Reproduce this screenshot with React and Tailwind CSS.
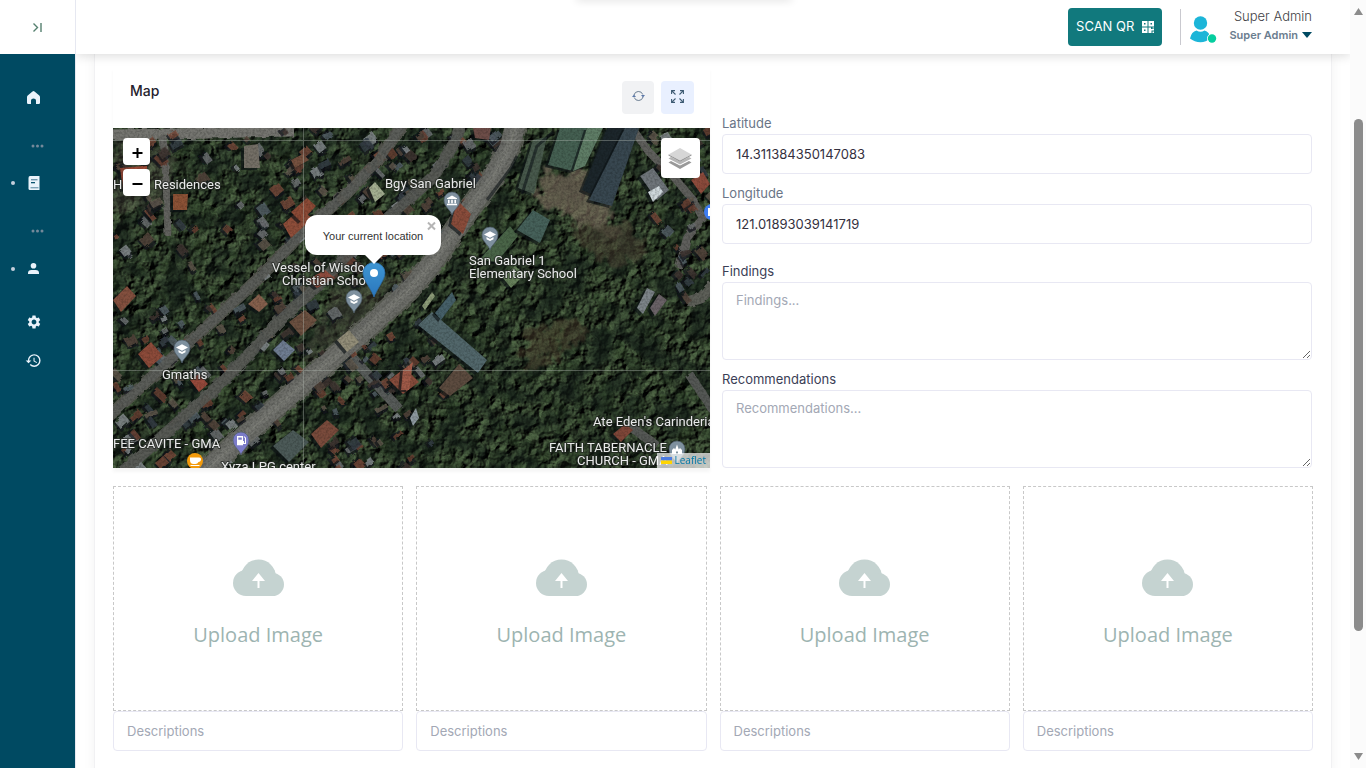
import React from "react";
import { MdSettings, MdHistory } from "react-icons/md";

const FOREST = ["#1d2b1b", "#263823", "#2c4127", "#182317", "#31462c", "#223221", "#141d15"];
const ROOFS = ["#6f4436", "#5a4a3f", "#74787a", "#57646c", "#453a34", "#7d4d3c", "#655d50", "#8d9396", "#3a424b"];

function seeded(seed) {
  let s = seed;
  return () => {
    s = (s * 16807) % 2147483647;
    return s / 2147483647;
  };
}

const rand = seeded(4127);
const trees = Array.from({ length: 1300 }, () => ({
  x: Math.round(rand() * 597),
  y: Math.round(rand() * 340),
  r: 2 + Math.round(rand() * 6),
  c: FOREST[Math.floor(rand() * FOREST.length)],
}));

const inside = (x, y) => {
  const edge = y < 90 ? 400 - y * 0.5 : 355 - (y - 90) * 0.9;
  const left = x < edge - 10;
  const south = y > 190 && x > 200 && x < 330 && x + y > 430;
  const east = x > 535 && y < 170 && x - y * 0.25 > 520;
  const gap = (x > 40 && x < 150 && y > 30 && y < 180) || (x < 90 && y > 125 && y < 170);
  return (left && (!gap || rand() > 0.8)) || south || east;
};
const houses = Array.from({ length: 640 }, () => ({
  x: Math.round(rand() * 597),
  y: Math.round(rand() * 340),
  w: 4 + Math.round(rand() * 9),
  h: 4 + Math.round(rand() * 6),
  a: (rand() > 0.5 ? -42 : 40) + Math.round(rand() * 16),
  c: ROOFS[Math.floor(rand() * ROOFS.length)],
})).filter((h) => inside(h.x, h.y));

const bigRoofs = [
  ["7,40 30,38 34,58 10,62", "#8a4535"],
  ["16,40 34,38 34,60 24,62", "#a04e3a"],
  ["0,172 14,158 23,168 8,184", "#84503f"],
  ["131,18 145,16 147,40 131,40", "#746f66"],
  ["60,66 75,66 74,82 60,82", "#8c5236"],
  ["170,96 186,82 200,90 178,110", "#8f4e3a"],
  ["178,84 194,70 203,78 188,94", "#8c4a36"],
  ["256,60 262,54 272,66 262,74", "#a3ae90"],
  ["160,222 170,212 182,222 171,233", "#6f7d92"],
  ["224,212 236,202 246,214 234,224", "#928d78"],
  ["25,226 38,214 50,228 36,240", "#8d4b3a"],
  ["178,32 190,26 196,32 182,40", "#76513f"],
  ["77,252 86,246 95,256 86,264", "#96493b"],
  ["135,176 146,166 155,176 146,184", "#86604d"],
  ["194,152 212,142 222,150 204,160", "#8f4c3e"],
  ["176,194 192,182 204,192 188,208", "#6b5040"],
  ["276,252 292,240 306,254 290,266", "#874c3c"],
  ["290,242 300,234 296,262 288,262", "#a05a48"],
  ["198,306 214,292 226,302 208,320", "#7a4b3c"],
  ["160,318 180,302 196,314 176,334", "#4c5a58"],
  ["360,0 378,0 376,12 362,10", "#6d4d48"],
  ["344,72 358,86 350,106 338,96", "#8a4c3b"],
  ["420,12 434,9 421,66 405,60", "#48594c"],
  ["447,0 474,0 460,43 435,37", "#456052"],
  ["474,0 490,0 472,38 460,43", "#5f7d66"],
  ["494,0 512,0 487,70 469,62", "#1c262b"],
  ["512,0 526,0 499,78 476,72", "#384750"],
  ["366,132 397,98 405,108 384,134", "#4a6548"],
  ["404,102 420,82 437,92 427,115", "#46615a"],
  ["390,150 402,138 412,146 398,160", "#66805a"],
  ["319,184 374,232 365,245 305,197", "#52676b"],
  ["339,164 343,172 328,192 322,185", "#466069"],
  ["309,178 319,164 322,168 312,182", "#8c9b78"],
  ["346,236 360,250 337,268 326,260", "#5c4b3f"],
  ["303,280 306,290 300,298 297,290", "#8d999f"],
  ["527,48 540,40 556,62 544,72", "#6f757a"],
  ["535,64 546,58 550,64 540,74", "#cfd8dc"],
  ["578,52 590,44 597,56 588,66", "#8d4b3c"],
  ["524,180 534,160 542,164 530,186", "#7d8489"],
  ["537,180 546,166 554,172 542,188", "#6a6267"],
  ["500,306 512,296 520,302 508,314", "#7f4638"],
];

const main = "M90 345 L124 314 L192 254 L248 206 L296 162 L320 134 L354 84 L378 52 L396 20 L403 -4";
const west = "M-4 288 L54 235 L104 189 L147 149 L190 104 L232 67 L264 34 L290 -4";
const middle = "M8 345 L60 299 L104 259 L137 225 L164 195 L200 162 L236 126 L287 79 L320 49 L342 14 L348 -4";

function Label({ x, y, children }) {
  return (
    <text x={x} y={y} fill="#e9eaea" stroke="#222622" strokeWidth="2" strokeOpacity="0.7" strokeLinejoin="round" paintOrder="stroke">
      {children}
    </text>
  );
}

function Pin({ x, y, color = "#7e909e", kind }) {
  return (
    <g transform={`translate(${x} ${y})`}>
      <path d="M0 14 C-1.500 8.500 -8 6 -8 -1 A8 8 0 0 1 8 -1 C8 6 1.500 8.500 0 14Z" fill={color} stroke="#4d5c68" strokeWidth="0.7" />
      {kind === "school" && (
        <g fill="#fff">
          <path d="M-6 -1.500 L0 -4.800 L6 -1.500 L0 1.800Z" />
          <path d="M-3.500 1 L0 3 L3.500 1 V3.200 L0 5 L-3.500 3.200Z" />
        </g>
      )}
      {kind === "hall" && (
        <path d="M-5 -2.800 L0 -5.500 L5 -2.800 V-2 H-5Z M-4 -1.200 H-2.400 V2.200 H-4Z M-0.800 -1.200 H0.800 V2.200 H-0.800Z M2.400 -1.200 H4 V2.200 H2.400Z M-5 2.800 H5 V4.200 H-5Z" fill="#fff" />
      )}
      {kind === "fuel" && (
        <path d="M-4 -5 H2 V0 H3 V2 H4 V-3 L2.600 -4 L3.300 -4.800 L5 -3.200 V3 H2 V4.200 H-4Z M-2.700 -3.600 V-1.300 H0.800 V-3.600Z" fill="#fff" fillRule="evenodd" />
      )}
      {kind === "church" && <path d="M-5 4 V0 L-3 -2 L-1.800 -0.500 L0 -5.500 L1.800 -0.500 L3 -2 L5 0 V4 H1 V1.500 H-1 V4Z" fill="#fff" />}
    </g>
  );
}

function Satellite() {
  return (
    <svg className="absolute inset-0 h-full w-full" viewBox="0 0 597 340" preserveAspectRatio="xMinYMid slice" role="img" aria-label="Satellite map">
      <defs>
        <filter id="canopy" x="0" y="0" width="100%" height="100%" colorInterpolationFilters="sRGB">
          <feTurbulence type="fractalNoise" baseFrequency="0.1" numOctaves="4" seed="8" result="n" />
          <feDiffuseLighting in="n" surfaceScale="6" lightingColor="#526a48" result="l">
            <feDistantLight azimuth="220" elevation="40" />
          </feDiffuseLighting>
        </filter>
        <filter id="shade" x="0" y="0" width="100%" height="100%" colorInterpolationFilters="sRGB">
          <feTurbulence type="fractalNoise" baseFrequency="0.04" numOctaves="4" seed="21" />
          <feColorMatrix values="0 0 0 0 0.07  0 0 0 0 0.11  0 0 0 0 0.09  4 0 0 0 -1.700" />
        </filter>
        <filter id="grain" x="0" y="0" width="100%" height="100%" colorInterpolationFilters="sRGB">
          <feTurbulence type="fractalNoise" baseFrequency="0.45" numOctaves="2" seed="5" />
          <feColorMatrix values="0 0 0 0 0.03  0 0 0 0 0.04  0 0 0 0 0.03  2.500 0 0 0 -0.950" />
        </filter>
        <filter id="rough" x="-2%" y="-2%" width="104%" height="104%">
          <feTurbulence type="fractalNoise" baseFrequency="0.14" numOctaves="2" seed="3" result="t" />
          <feDisplacementMap in="SourceGraphic" in2="t" scale="4" />
        </filter>
        <filter id="haze" x="-20%" y="-20%" width="140%" height="140%" colorInterpolationFilters="sRGB">
          <feTurbulence type="fractalNoise" baseFrequency="0.1" numOctaves="4" seed="12" result="t" />
          <feDisplacementMap in="SourceGraphic" in2="t" scale="34" xChannelSelector="R" yChannelSelector="G" result="d" />
          <feGaussianBlur in="d" stdDeviation="1" />
        </filter>
      </defs>
      <rect width="597" height="340" fill="#222e20" />
      <rect width="597" height="340" filter="url(#canopy)" />
      <g opacity="0.4" filter="url(#rough)">
        {trees.map((t, i) => (
          <circle key={i} cx={t.x} cy={t.y} r={t.r} fill={t.c} />
        ))}
      </g>
      <rect width="597" height="340" filter="url(#shade)" opacity="0.6" />
      <g filter="url(#haze)" opacity="0.7">
        <path d="M430 40 L480 46 L482 70 L500 84 L505 115 L478 100 L450 86 L424 74Z" fill="#7b6f5f" />
        <path d="M455 95 L520 96 L535 125 L500 140 L470 120Z" fill="#544a3a" opacity="0.7" />
        <path d="M410 204 L440 196 L470 192 L474 212 L440 228 L414 246Z" fill="#594b38" opacity="0.65" />
        <path d="M0 10 L60 14 L60 70 L0 90Z" fill="#5c5a4e" opacity="0.5" />
        <path d="M220 160 L290 150 L250 200 L190 240Z" fill="#5c584b" opacity="0.5" />
      </g>
      <g fill="none" stroke="#5d5f59" strokeLinejoin="round" filter="url(#rough)">
        <path d="M-4 7 L60 6 L130 4 L180 3" stroke="#74756f" strokeWidth="11" />
        <path d="M50 8 L53 50 L55 108" stroke="#63645f" strokeWidth="7" />
        <path d={west} stroke="#54574f" strokeWidth="12" />
        <path d={middle} stroke="#50534e" strokeWidth="12" />
        <path d="M237 227 L286 281" stroke="#595b5a" strokeWidth="10" />
        <path d="M516 -4 L536 24 L560 48 L580 72 L590 90 L574 110 L566 140" stroke="#5e5f5b" strokeWidth="8" />
        <path d="M600 157 L588 170 L574 174" strokeWidth="11" />
        <path d="M576 246 L600 282 M514 296 L544 318" stroke="#555954" strokeWidth="9" />
        <path d={main} stroke="#5c5e57" strokeWidth="23" />
      </g>
      <g filter="url(#rough)">
        {houses.map((h, i) => (
          <g key={i} transform={`translate(${h.x} ${h.y}) rotate(${h.a})`}>
            <rect x="-2" y="1" width={h.w + 1} height={h.h + 2} fill="#10161a" opacity="0.7" />
            <rect width={h.w} height={h.h} fill={h.c} opacity="0.8" />
          </g>
        ))}
      </g>
      <g fill="none" strokeLinejoin="round">
        <path d={west} stroke="#5c5e5a" strokeWidth="9" opacity="0.9" />
        <path d={middle} stroke="#595b57" strokeWidth="10" opacity="0.9" />
        <path d={main} stroke="#6d6e69" strokeWidth="19" opacity="0.95" />
        <path d={main} stroke="#7c7d77" strokeWidth="8" opacity="0.6" />
        <path d={main} stroke="#8a8c82" strokeWidth="1" opacity="0.5" />
      </g>
      {bigRoofs.map(([points, fill]) => (
        <g key={points}>
          <polygon points={points} fill="#0d1316" opacity="0.65" transform="translate(-3 2)" />
          <polygon points={points} fill={fill} />
        </g>
      ))}
      <path d="M409 66 L424 18 L440 4 M374 72 L398 40 L404 28" stroke="#10171a" strokeWidth="3" fill="none" opacity="0.6" />
      <rect width="597" height="340" filter="url(#grain)" opacity="0.2" />
      <path d="M0 12.500 H597 M0 242.500 H597 M190.500 0 V340" stroke="#aeb6ae" strokeWidth="1" opacity="0.4" />
      <Pin x={339} y={73} kind="hall" />
      <Pin x={377} y={108} kind="school" />
      <Pin x={241} y={171} kind="school" />
      <Pin x={69} y={221} kind="school" />
      <Pin x={128} y={313} kind="fuel" color="#7b7bc8" />
      <Pin x={564} y={322} kind="church" />
      <circle cx="82" cy="333" r="8" fill="#f29a0c" />
      <path d="M77 329.500 H86 Q88.500 329.500 88 332 Q87.500 334 85.500 334 Q84.500 336 82.500 336 H80.500 Q77 336 77 332Z M77.500 337 H86.500 V338 H77.500Z" fill="#fff" />
      <circle cx="599" cy="84" r="8" fill="#3f7df0" />
      <path d="M595 80 H597 V88 H595Z" fill="#fff" />
      <g fontFamily="Roboto, sans-serif" fontSize="13">
        <Label x={0} y={61}>Hu</Label>
        <Label x={41} y={61}>Residences</Label>
        <Label x={272} y={60}>Bgy San Gabriel</Label>
        <Label x={356} y={137}>
          San Gabriel 1
          <tspan x={356} dy="13">Elementary School</tspan>
        </Label>
        <Label x={159} y={144}>
          Vessel of Wisdo
          <tspan x={169} dy="13">Christian Scho</tspan>
        </Label>
        <Label x={49} y={251}>Gmaths</Label>
        <Label x={0} y={320}>FEE CAVITE - GMA</Label>
        <Label x={108} y={343}>Xyza LPG center</Label>
        <Label x={480} y={298}>Ate Eden's Carinderia</Label>
        <Label x={436} y={324}>
          FAITH TABERNACLE
          <tspan x={464} dy="13">CHURCH - GMA</tspan>
        </Label>
      </g>
    </svg>
  );
}

function MapView() {
  return (
    <div className="relative h-[340px] overflow-hidden bg-[#222e20]">
      <Satellite />
      <div className="absolute left-[10px] top-[10px] flex flex-col gap-1 text-black">
        <button type="button" aria-label="Zoom in" className="flex h-[27px] w-[27px] items-center justify-center rounded bg-white pl-px pt-0.5">
          <svg width="11" height="11" viewBox="0 0 11 11"><path d="M0.500 6 H10.500 M5.500 1 V11" stroke="currentColor" strokeWidth="2" /></svg>
        </button>
        <button type="button" aria-label="Zoom out" className="flex h-[27px] w-[27px] items-center justify-center rounded bg-white pl-px pt-0.5">
          <svg width="11" height="11" viewBox="0 0 11 11"><path d="M0.500 6 H10.500" stroke="currentColor" strokeWidth="2" /></svg>
        </button>
      </div>
      <button type="button" aria-label="Layers" className="absolute right-[10px] top-[10px] flex h-10 w-[39px] items-center justify-center rounded bg-white pr-0.5">
        <svg width="26" height="26" viewBox="0 0 26 26">
          <path d="M1.500 17.500 L4 16 L13 20.500 L22 16 L24.500 17.500 L13 24Z" fill="#999" />
          <path d="M1.500 13.500 L4 12 L13 16.500 L22 12 L24.500 13.500 L13 19.500Z" fill="#b5b5b5" />
          <path d="M1.500 9.500 L13 3 L24.500 9.500 L13 15.500Z" fill="#d6d6d6" />
          <path d="M1.500 9.500 L13 15.500 L24.500 9.500 V10.500 L13 16.800 L1.500 10.500Z" fill="#8f8f8f" />
        </svg>
      </button>
      <svg className="absolute left-[249px] top-[134px]" width="24" height="36" viewBox="0 0 24 36" aria-label="Marker">
        <defs>
          <linearGradient id="pin" x1="0" y1="0" x2="0" y2="1">
            <stop offset="0" stopColor="#3f97d3" />
            <stop offset="1" stopColor="#2a76bd" />
          </linearGradient>
        </defs>
        <path d="M12 35 C10 28 1 18 1 11 A11 10.500 0 0 1 23 11 C23 18 14 28 12 35Z" fill="url(#pin)" stroke="#2e6fa8" strokeWidth="0.8" />
        <circle cx="12" cy="11" r="4" fill="#fff" />
      </svg>
      <div className="absolute left-[192px] top-[87px] flex h-10 w-[136px] items-center justify-center rounded-xl bg-white pt-0.5 font-['Liberation_Sans',sans-serif] text-[11px] text-[#333]">
        Your current location
        <button type="button" aria-label="Close popup" className="absolute right-[5px] top-[6px] text-[#b5b5b5]">
          <svg width="9" height="10" viewBox="0 0 9 10"><path d="M1 1.500 L8 8.500 M8 1.500 L1 8.500" stroke="currentColor" strokeWidth="2" /></svg>
        </button>
        <svg className="absolute left-[60px] top-10" width="18" height="9" viewBox="0 0 18 9"><path d="M0 0 H18 L9 9Z" fill="#fff" /></svg>
      </div>
      <div className="absolute bottom-0 right-0 flex h-[15px] items-center gap-[3px] bg-white/70 px-1 font-['Open_Sans',sans-serif] text-[10px] leading-[15px]">
        <svg width="11" height="7" viewBox="0 0 11 7"><path d="M0 0H11V3.500H0Z" fill="#4c7be1" /><path d="M0 3.500H11V7H0Z" fill="#ffd500" /></svg>
        <a href="#leaflet" className="text-[#0078a8]">Leaflet</a>
      </div>
    </div>
  );
}

const fieldBox = "block w-full rounded border border-[#e8e8f3] bg-white px-[13px] text-[13px] text-[#34303e] outline-none placeholder:text-[#a3a8b5]";
const labelBox = "block pb-0.5 text-[13px] leading-[18px]";

function Dots() {
  return (
    <svg className="ml-[31px] mt-5 h-[18px]" width="13" viewBox="0 0 13 18" fill="#74899a" aria-hidden="true">
      <circle cx="2" cy="9" r="1.500" /><circle cx="6.500" cy="9" r="1.500" /><circle cx="11" cy="9" r="1.500" />
    </svg>
  );
}

function NavItem({ label, bullet, className = "", children }) {
  return (
    <a href={"#" + label.toLowerCase()} aria-label={label} className={"flex h-[39px] items-center text-[#eaf3fb] " + className}>
      <span className="flex w-[25px] justify-center">
        {bullet && <span className="h-1 w-1 rounded-full bg-[#c5cfdc]" />}
      </span>
      <span className="flex w-[17px] justify-center">{children}</span>
    </a>
  );
}

function Sidebar() {
  return (
    <aside className="flex w-[75px] shrink-0 flex-col bg-[#004a62]">
      <div className="flex h-[54px] shrink-0 items-center bg-white pl-[32px]">
        <button type="button" aria-label="Expand menu" className="text-[#55806f]">
          <svg width="11" height="11" viewBox="0 0 11 11" fill="none" stroke="currentColor" strokeWidth="1.400"><path d="M1.500 1.500 L5.500 5.500 L1.500 9.500 M9 1 V10" /></svg>
        </button>
      </div>
      <nav className="flex flex-col pt-6">
        <NavItem label="Home">
          <svg width="13" height="13" viewBox="0 0 13 13" fill="currentColor"><path d="M5.500 0.500 Q6.500 -0.300 7.500 0.500 L12.300 4.600 Q13 5.200 13 6 V11.800 Q13 13 11.800 13 H9 V9.500 Q9 7.500 6.500 7.500 Q4 7.500 4 9.500 V13 H1.200 Q0 13 0 11.800 V6 Q0 5.200 0.700 4.600Z" /></svg>
        </NavItem>
        <Dots />
        <NavItem label="Records" bullet className="mt-2">
          <svg width="12" height="14" viewBox="0 0 12 14"><path d="M2 0 H11.500 V14 H2 Q0.500 14 0.500 12.500 V2 Q0.500 0 2 0Z" fill="currentColor" /><path d="M2.500 11 H10.500 V12.400 H2.500Z" fill="#7fa3b8" /><path d="M3 3 H9.500 V4.400 H3Z" fill="#6f96ac" /><path d="M3 6 H7 V7.300 H3Z" fill="#0b5470" /></svg>
        </NavItem>
        <Dots />
        <NavItem label="Users" bullet className="mt-[9px]">
          <svg width="11" height="11" viewBox="0 0 11 11" fill="currentColor"><circle cx="5.500" cy="2.800" r="2.800" /><path d="M0 11 V10 Q0 7 3.500 7 H7.500 Q11 7 11 10 V11Z" /></svg>
        </NavItem>
        <NavItem label="Settings" className="mt-[14px]"><MdSettings size={16} className="shrink-0" /></NavItem>
        <NavItem label="History"><MdHistory size={17} className="shrink-0" /></NavItem>
      </nav>
    </aside>
  );
}

function Header() {
  return (
    <header className="relative z-10 flex h-[54px] shrink-0 items-center justify-end bg-white pr-[38px] shadow-[0_2px_10px_rgba(0,0,0,0.14)]">
      <div className="absolute inset-x-0 top-0 flex justify-center overflow-hidden pb-3 pr-[58px]" aria-hidden="true">
        <div className="-mt-1 h-1 w-[216px] rounded-full shadow-[0_0_8px_rgba(0,0,0,0.18)]" />
      </div>
      <button type="button" className="relative flex h-[38px] items-center gap-2 rounded bg-[#11797d] px-[8px] text-[13px] text-white">
        SCAN QR
        <svg width="12" height="12" viewBox="0 0 12 12" fill="#fff"><path fillRule="evenodd" d="M0 0H5.500V5.500H0Z M2 2V3.500H3.500V2Z M6.500 0H12V5.500H6.500Z M8.500 2V3.500H10V2Z M0 6.500H5.500V12H0Z M2 8.500V10H3.500V8.500Z" /><path d="M6.500 6.500H9V8H12V9.500H9.500V12H6.500Z M10.500 6.500H12V7.500H10.500Z M10.500 10.500H12V12H10.500Z" /></svg>
      </button>
      <div className="relative ml-[18px] h-9 w-px bg-[#c9c9cf]" />
      <svg className="relative ml-[9px] mt-1" width="28" height="30" viewBox="0 0 28 30" aria-label="Profile picture">
        <circle cx="10.500" cy="9" r="6.700" fill="#1cb5d8" />
        <path d="M0 24.500 Q1.500 17.500 6.500 16.500 Q10.500 19 14.500 16.500 Q19.500 17.500 20.500 24.500 Q16 28.200 10.500 28.200 Q4.500 28.200 0 24.500Z" fill="#1cb5d8" />
        <circle cx="22" cy="24.500" r="5" fill="#fff" />
        <circle cx="22" cy="24.500" r="4.200" fill="#05ce9f" />
      </svg>
      <div className="relative ml-[11px] flex flex-col items-end pb-1">
        <span className="text-[13px] font-light leading-5 text-[#3f3f46]">Super Admin</span>
        <button type="button" className="flex items-center gap-1 text-[11px] font-semibold leading-[18px] text-[#6b7d8f]">
          Super Admin
          <svg width="10" height="6" viewBox="0 0 10 6"><path d="M0 0H10L5 6Z" fill="#004a62" /></svg>
        </button>
      </div>
    </header>
  );
}

function UploadCard({ id }) {
  return (
    <div>
      <button type="button" className="flex h-[225px] w-full flex-col items-center border border-dashed border-[#c8c8c8] pt-[72px]">
        <svg width="51" height="38" viewBox="0 0 51 38" aria-hidden="true">
          <g fill="#c5d3d1"><circle cx="13" cy="24" r="13" /><circle cx="25.500" cy="18" r="17.500" /><circle cx="39.500" cy="25.500" r="11.500" /><rect x="13" y="22" width="26.500" height="15" /></g>
          <path d="M25.500 14 L32 22 H26.500 V29 H24.500 V22 H19Z" fill="#fff" />
        </svg>
        <span className="mt-[24px] font-['Open_Sans',sans-serif] text-[20px] leading-7 text-[#9db4b1]">Upload Image</span>
      </button>
      <input aria-label={"Description of image " + id} placeholder="Descriptions" className={fieldBox + " h-10"} />
    </div>
  );
}

export default function App() {
  return (
    <div className="flex h-screen overflow-hidden bg-white font-[Inter,sans-serif]">
      <Sidebar />
      <div className="flex min-w-0 flex-1 flex-col overflow-hidden border-l border-[#e6e8f1]">
        <Header />
        <main className="min-h-0 flex-1 overflow-hidden px-[18px]">
          <form className="min-h-full border-x border-[#f1f1f3] px-[18px] pb-6 pt-[13px] shadow-[0_0_12px_rgba(0,0,0,0.05)]">
            <div className="grid grid-cols-[596fr_590fr] gap-3">
              <section className="shadow-[0_4px_3px_rgba(0,0,0,0.04)]">
                <div className="flex h-[61px] items-start justify-between pl-[17px] pr-4 pt-[14px]">
                  <h2 className="text-[14px] font-medium leading-5 text-[#26222e]">Map</h2>
                  <div className="flex gap-[7px]">
                    <button type="button" aria-label="Refresh" className="flex h-[33px] w-8 items-start justify-center rounded bg-[#f1f2f4] pt-[9px]">
                      <svg width="13" height="12" viewBox="0 0 13 12" fill="none" stroke="#6c7f93" strokeWidth="1"><path d="M2 5 A4.600 4.600 0 0 1 10.800 4.500 M11 7 A4.600 4.600 0 0 1 2.200 7.500" /><path d="M9 5 H13 L11 7.500Z M0 7 H4 L2 4.500Z" fill="#5c78a8" stroke="none" /></svg>
                    </button>
                    <button type="button" aria-label="Full screen" className="flex h-[33px] w-[33px] items-start justify-center rounded bg-[#e9f0ff] pt-[9px]">
                      <svg width="13" height="13" viewBox="0 0 13 13" fill="none" stroke="#3d5a73" strokeWidth="1.100"><path d="M0.600 4 V0.600 H4 M0.600 0.600 L4.500 4.500 M9 0.600 H12.400 V4 M12.400 0.600 L8.500 4.500 M0.600 9 V12.400 H4 M0.600 12.400 L4.500 8.500 M9 12.400 H12.400 V9 M12.400 12.400 L8.500 8.500" /></svg>
                    </button>
                  </div>
                </div>
                <MapView />
              </section>
              <section className="flex flex-col pr-px pt-[47px]">
                <label htmlFor="lat" className={labelBox + " text-[#6a7587]"}>Latitude</label>
                <input id="lat" defaultValue="14.311384350147083" className={fieldBox + " h-10"} />
                <label htmlFor="lng" className={labelBox + " mt-[10px] text-[#6a7587]"}>Longitude</label>
                <input id="lng" defaultValue="121.01893039141719" className={fieldBox + " h-10"} />
                <label htmlFor="findings" className={labelBox + " mt-[18px] text-[#3b4056]"}>Findings</label>
                <textarea id="findings" placeholder="Findings..." className={fieldBox + " h-[78px] resize-y py-[7px] leading-5"} />
                <label htmlFor="recs" className={labelBox + " mt-[10px] text-[#3b4056]"}>Recommendations</label>
                <textarea id="recs" placeholder="Recommendations..." className={fieldBox + " h-[78px] resize-y py-[7px] leading-5"} />
              </section>
            </div>
            <div className="mt-[18px] grid grid-cols-4 gap-[13px]">
              {[1, 2, 3, 4].map((n) => (
                <UploadCard key={n} id={n} />
              ))}
            </div>
          </form>
        </main>
      </div>
      <div className="flex w-4 shrink-0 flex-col items-center justify-between bg-[#fbfbfb] py-2" aria-hidden="true">
        <svg width="9" height="7" viewBox="0 0 9 7"><path d="M4.500 0 L9 7 H0Z" fill="#8b8b8b" /></svg>
        <div className="flex w-full flex-1 flex-col items-center pt-[104px]">
          <div className="h-[512px] w-[9px] rounded-full bg-[#8b8b8b]" />
        </div>
        <svg width="9" height="7" viewBox="0 0 9 7"><path d="M0 0 H9 L4.500 7Z" fill="#8b8b8b" /></svg>
      </div>
    </div>
  );
}
